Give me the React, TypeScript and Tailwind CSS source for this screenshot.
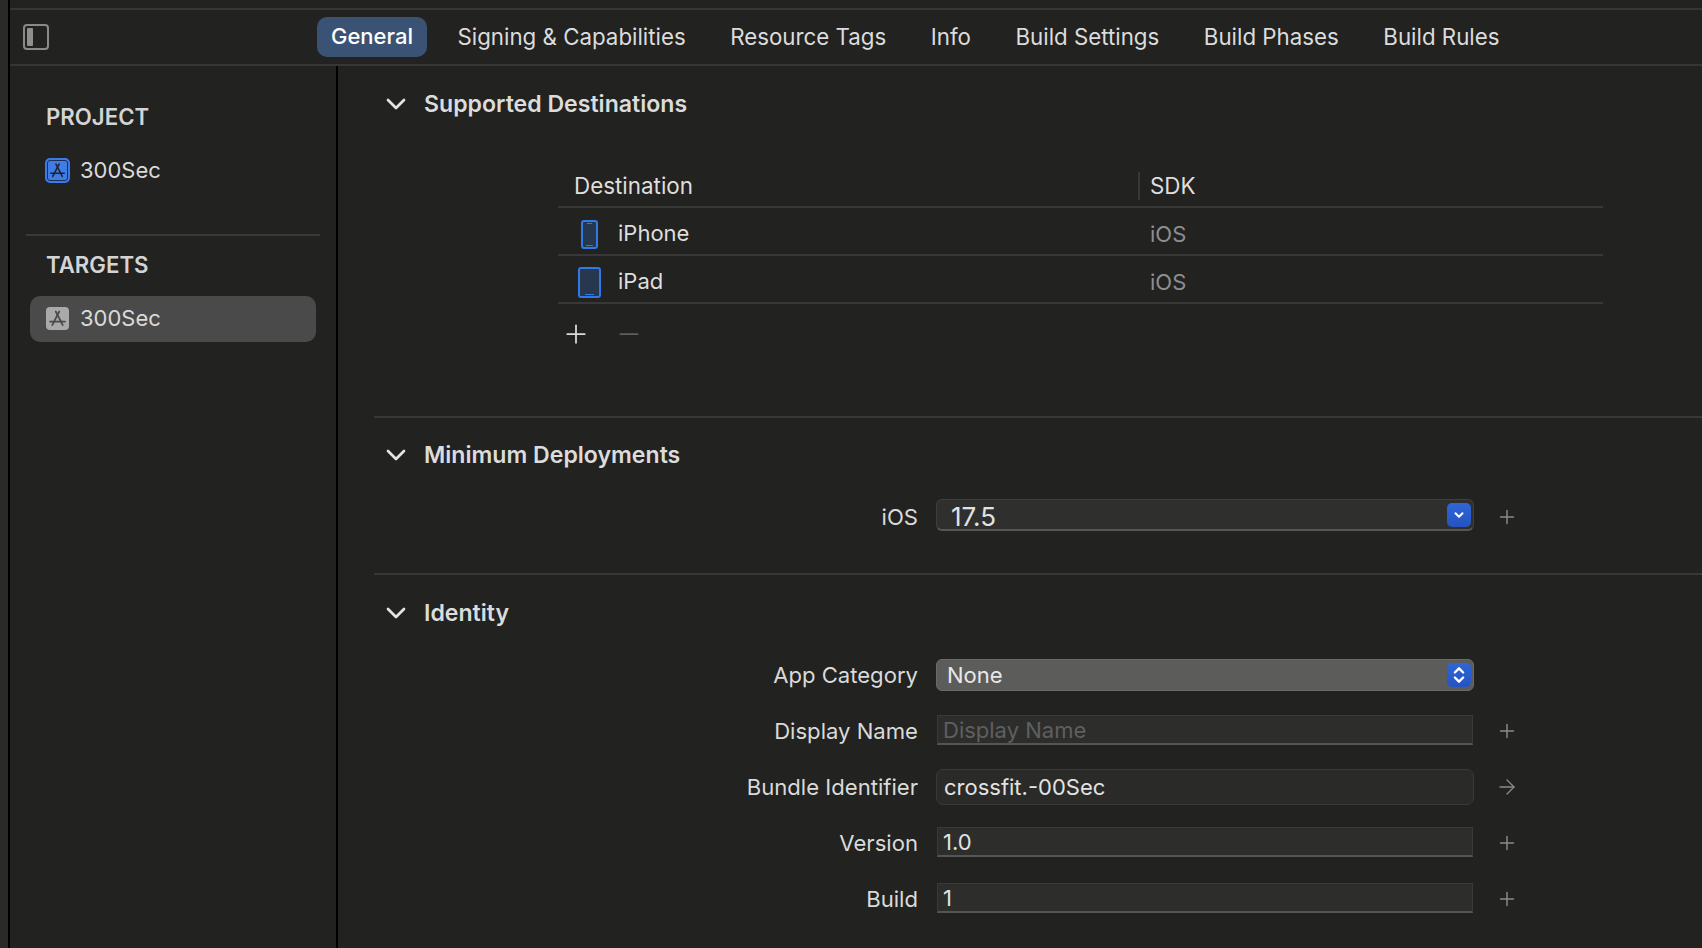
import React from 'react';
import { ChevronDown, Plus, Minus, ArrowRight, ChevronsUpDown } from 'lucide-react';

const tabs = ['General', 'Signing & Capabilities', 'Resource Tags', 'Info', 'Build Settings', 'Build Phases', 'Build Rules'];

const AppGlyph: React.FC<{ stroke: string }> = ({ stroke }) => (
  <svg viewBox="0 0 24 24" className="w-full h-full" fill="none" stroke={stroke} strokeWidth="2" strokeLinecap="round">
    <path d="M10 4 L18 19.5" />
    <path d="M14 4 L6 19.5" />
    <path d="M3.5 15.5 H20.5" />
  </svg>
);

const SectionHeader: React.FC<{ title: string }> = ({ title }) => (
  <div className="flex items-center h-[30px]">
    <ChevronDown className="w-[32px] h-[32px] ml-[6px] text-[#e4e4e4]" strokeWidth={2} />
    <span className="ml-[12px] text-[23.1px] font-semibold text-[#dcdcdc]">{title}</span>
  </div>
);

const DeviceRow: React.FC<{ name: string; tablet?: boolean }> = ({ name, tablet }) => (
  <div className="flex items-center h-[48px] pt-[6px] border-b-2 border-[#383837]">
    <div className="w-[60px] flex justify-center shrink-0 ml-[1px]">
      {tablet ? (
        <div className="w-[23px] h-[31px] rounded-[3px] border-2 border-[#2f7ae5] bg-[#27374f] flex items-end justify-center pb-[1px]">
          <div className="w-[9px] h-[1px] bg-[#2f7ae5]" />
        </div>
      ) : (
        <div className="w-[17px] h-[29px] rounded-[3px] border-2 border-[#2f7ae5] bg-[#27374f] flex flex-col items-center justify-between py-[1px]">
          <div className="w-[5px] h-[1px] bg-[#2f7ae5]" />
          <div className="w-[7px] h-[1px] bg-[#2f7ae5]" />
        </div>
      )}
    </div>
    <span className="w-[532px] shrink-0 -ml-[1px] text-[22px] text-[#dedede] -mt-[2px]">{name}</span>
    <span className="text-[22px] text-[#8e8e8e]">iOS</span>
  </div>
);

const BlueStepper: React.FC<{ single?: boolean }> = ({ single }) => (
  <div className="w-[24px] h-[24px] rounded-[5px] bg-gradient-to-b from-[#2f66d8] to-[#2553c0] flex items-center justify-center text-white shrink-0">
    {single ? <ChevronDown className="w-[14px] h-[14px]" strokeWidth={3.5} /> : <ChevronsUpDown className="w-[20px] h-[20px]" strokeWidth={2.8} />}
  </div>
);

const FormRow: React.FC<{ label: string; icon?: 'plus' | 'arrow' | 'none'; children: React.ReactNode }> = ({ label, icon = 'plus', children }) => (
  <div className="flex items-center h-[56px]">
    <span className="w-[544px] shrink-0 pt-[2px] text-right text-[22.1px] text-[#dadada]">{label}</span>
    <div className="w-[538px] ml-[18px] shrink-0 flex justify-center">{children}</div>
    <div className="w-[24px] ml-[21px] flex justify-center text-[#8b8b8b]">
      {icon === 'plus' && <Plus className="w-[22px] h-[22px]" strokeWidth={1.6} />}
      {icon === 'arrow' && <ArrowRight className="w-[24px] h-[24px]" strokeWidth={1.3} />}
    </div>
  </div>
);

const TextField: React.FC<{ value: string; placeholder?: boolean }> = ({ value, placeholder }) => (
  <div className={`w-[536px] h-[30px] -mt-[2px] pt-[2px] bg-[#2d2d2c] border border-[#3a3a39] border-b-2 border-b-[#555554] flex items-center px-[5px] text-[22px] ${placeholder ? 'text-[#5f5f5f]' : 'text-[#e2e2e2]'}`}>
    {value}
  </div>
);

export default function App() {
  return (
    <div className="w-[1702px] h-[948px] overflow-hidden flex bg-[#222221] font-['Inter',sans-serif]">
      <div className="w-[10px] shrink-0 bg-[#2a2a27] border-r-2 border-black" />

      <div className="flex-1 min-w-0 flex flex-col">
        <div className="h-[10px] shrink-0 border-b-2 border-[#363635]" />

        {/* Tab bar */}
        <div className="h-[56px] shrink-0 flex items-center border-b-2 border-[#363635] pb-[1px]">
          <div className="w-[26px] h-[26px] ml-[13px] rounded-[4px] border-2 border-[#8a8a8a] p-[2px] shrink-0">
            <div className="w-[6px] h-full rounded-[1px] bg-[#8f8f8f]" />
          </div>
          <div className="flex items-center gap-[16.5px] ml-[268px]">
            {tabs.map((tab, i) => (
              <div
                key={tab}
                className={`h-[40px] px-[14px] flex items-center rounded-[10px] ${i === 0 ? 'bg-[#3a5374] text-white font-medium text-[22px]' : 'text-[#dcdcdc] text-[22.3px]'}`}
              >
                {tab}
              </div>
            ))}
          </div>
        </div>

        <div className="flex-1 min-h-0 flex">
          {/* Sidebar */}
          <div className="w-[328px] shrink-0 border-r-2 border-black pt-[36px]">
            <div className="pl-[36px] text-[22.2px] font-semibold text-[#d4d4d4] leading-[30px]">PROJECT</div>
            <div className="flex items-center h-[30px] mt-[23px] pl-[35px]">
              <div className="w-[25px] h-[25px] rounded-[5px] border-2 border-[#3a7be8] bg-[#3f7ce6]">
                <div className="w-full h-full rounded-[3px] border border-[#1c2f55]">
                  <AppGlyph stroke="#1b2436" />
                </div>
              </div>
              <span className="ml-[10px] text-[22px] text-[#dadada]">300Sec</span>
            </div>
            <div className="h-[2px] bg-[#3a3a39] mx-[16px] mt-[49px]" />
            <div className="pl-[36px] mt-[14px] text-[22.2px] font-semibold text-[#d4d4d4] leading-[30px]">TARGETS</div>
            <div className="h-[46px] mx-[20px] mt-[16px] pl-[16px] pb-[2px] rounded-[10px] bg-[#4a4a4a] flex items-center">
              <div className="w-[23px] h-[23px] rounded-[4px] bg-[#a9a9a9] p-[1px]">
                <AppGlyph stroke="#4a4a4a" />
              </div>
              <span className="ml-[11px] text-[22px] text-[#dadada]">300Sec</span>
            </div>
          </div>

          {/* Content */}
          <div className="flex-1 min-w-0 pl-[36px]">
            <div className="h-[352px] border-b-2 border-[#383837] pt-[23px]">
              <SectionHeader title="Supported Destinations" />
              <div className="w-[1045px] ml-[184px] mt-[42px]">
                <div className="flex items-center h-[47px] pt-[4px] border-b-2 border-[#383837] text-[22.4px] text-[#dedede]">
                  <span className="w-[580px] shrink-0 pl-[16px]">Destination</span>
                  <span className="border-l-2 border-[#383837] h-[28px] pl-[10px] flex items-center">SDK</span>
                </div>
                <DeviceRow name="iPhone" />
                <DeviceRow name="iPad" tablet />
                <div className="flex items-center h-[59px] pl-[3px]">
                  <Plus className="w-[30px] h-[30px] text-[#dddddd]" strokeWidth={1.4} />
                  <Minus className="w-[30px] h-[30px] ml-[23px] text-[#5e5e5e]" strokeWidth={1.4} />
                </div>
              </div>
            </div>

            <div className="h-[157px] border-b-2 border-[#383837] pt-[22px]">
              <SectionHeader title="Minimum Deployments" />
              <div className="mt-[19px]">
                <FormRow label="iOS">
                  <div className="w-[538px] h-[32px] -mt-[4px] rounded-[6px] bg-[#2f2f2e] border border-[#3f3f3e] border-b-2 border-b-[#565655] flex items-center justify-between pl-[14px] pr-[2px] text-[26px] text-[#e2e2e2]">
                    <span className="pt-[4px]">17.5</span>
                    <BlueStepper single />
                  </div>
                </FormRow>
              </div>
            </div>

            <div className="pt-[23px]">
              <SectionHeader title="Identity" />
              <div className="mt-[19px]">
                <FormRow label="App Category" icon="none">
                  <div className="w-[538px] h-[32px] rounded-[6px] bg-[#5c5c5b] border border-[#6a6a69] flex items-center justify-between pl-[10px] pr-[2px] text-[22px] text-[#e8e8e8]">
                    <span>None</span>
                    <BlueStepper />
                  </div>
                </FormRow>
                <FormRow label="Display Name">
                  <TextField value="Display Name" placeholder />
                </FormRow>
                <FormRow label="Bundle Identifier" icon="arrow">
                  <div className="w-[538px] h-[36px] rounded-[7px] bg-[#2a2a29] border border-[#3a3a39] flex items-center px-[7px] text-[22px] text-[#e2e2e2]">
                    crossfit.-00Sec
                  </div>
                </FormRow>
                <FormRow label="Version">
                  <TextField value="1.0" />
                </FormRow>
                <FormRow label="Build">
                  <TextField value="1" />
                </FormRow>
              </div>
            </div>
          </div>
        </div>
      </div>
    </div>
  );
}
